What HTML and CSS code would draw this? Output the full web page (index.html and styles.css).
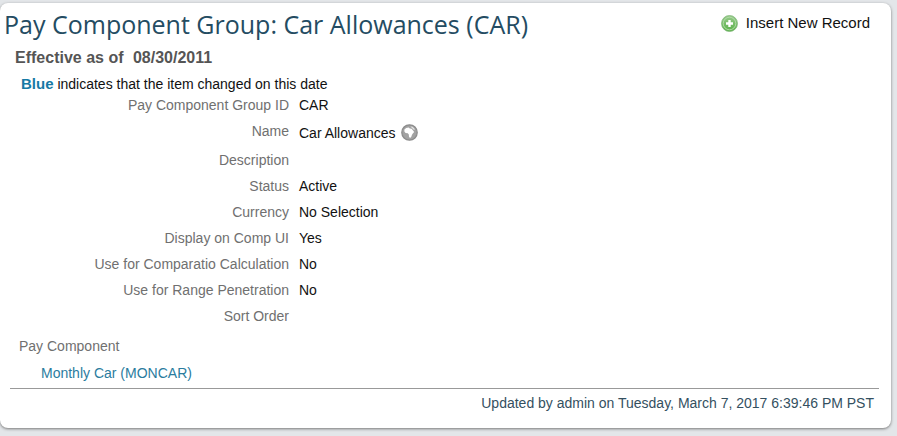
FILE: index.html
```html
<!DOCTYPE html>
<html lang="en">
<head>
    <meta charset="UTF-8">
    <meta name="viewport" content="width=device-width, initial-scale=1.0">
    <title>Pay Component Group: Car Allowances (CAR)</title>
    <link rel="stylesheet" href="styles.css">
</head>
<body>
    <main class="card">
        <header class="card-header">
            <h1>Pay Component Group: Car Allowances (CAR)</h1>
            <button type="button" class="insert-button">
                <svg class="icon" viewBox="0 0 17 17" aria-hidden="true">
                    <defs>
                        <linearGradient id="green" x1="0" y1="0" x2="0" y2="1">
                            <stop offset="0" stop-color="#98cb8c"/>
                            <stop offset="1" stop-color="#58b048"/>
                        </linearGradient>
                    </defs>
                    <circle cx="8.5" cy="8.5" r="8" fill="url(#green)" stroke="#84b97c" stroke-width=".8"/>
                    <circle cx="8.5" cy="8.5" r="6.3" fill="none" stroke="#b5dcab" stroke-width=".9"/>
                    <path d="M8.5 5v7M5 8.5h7" stroke="#fff" stroke-width="2.4"/>
                </svg>
                Insert New Record
            </button>
        </header>

        <h2 class="effective">Effective as of <time datetime="2011-08-30">08/30/2011</time></h2>
        <p class="legend"><strong>Blue</strong> indicates that the item changed on this date</p>

        <dl class="fields">
            <div class="field"><dt>Pay Component Group ID</dt><dd>CAR</dd></div>
            <div class="field field-name">
                <dt>Name</dt>
                <dd>
                    Car Allowances
                    <button type="button" class="globe-button" aria-label="Translations">
                        <svg class="icon" viewBox="0 0 17 17" aria-hidden="true">
                            <circle cx="8.5" cy="8.5" r="7.7" fill="#a2a2a2" stroke="#8c8c8c" stroke-width="1.3"/>
                            <path d="M3.4 5.6 5.2 4 7.6 3.6 8.8 4.6 10.6 4.8 12 6.6 13.2 8 12 9.2 11 10.8 10.2 13 9 14 8 12.8 7.8 10.6 6.8 9.2 4.6 9 3.4 7.6Z" fill="#fff"/>
                            <path d="M9.4 2.6 11.6 2.8 13.4 4.4 13.8 6 12.4 5.6 11 4Z" fill="#e4e4e4"/>
                        </svg>
                    </button>
                </dd>
            </div>
            <div class="field"><dt>Description</dt><dd></dd></div>
            <div class="field"><dt>Status</dt><dd>Active</dd></div>
            <div class="field"><dt>Currency</dt><dd>No Selection</dd></div>
            <div class="field"><dt>Display on Comp UI</dt><dd>Yes</dd></div>
            <div class="field"><dt>Use for Comparatio Calculation</dt><dd>No</dd></div>
            <div class="field"><dt>Use for Range Penetration</dt><dd>No</dd></div>
            <div class="field"><dt>Sort Order</dt><dd></dd></div>
        </dl>

        <section class="components">
            <h3>Pay Component</h3>
            <a href="#">Monthly Car (MONCAR)</a>
        </section>

        <footer class="updated">Updated by admin on Tuesday, March 7, 2017 6:39:46 PM PST</footer>
    </main>
</body>
</html>
```
FILE: styles.css
```css
:root {
    --page-color: #e3e6e9;
    --heading-color: #244c62;
    --label-color: #707070;
    --link-color: #2b7c9e;
}
body {
    margin: 0;
    padding: 3px 6px 8px 0;
    background-color: var(--page-color);
    color: #111;
    font-family: "Liberation Sans", Arial, sans-serif;
    font-size: 14px;
    line-height: 26px;
}
h1, h2, h3, p, dl, dd {
    margin: 0;
}
button {
    border: none;
    padding: 0;
    background: none;
    color: inherit;
    font: inherit;
    cursor: pointer;
}
.card {
    background-color: #fff;
    border-radius: 8px;
    padding-bottom: 12px;
    box-shadow: 0 1px 3px #777;
}
.card-header {
    display: flex;
    justify-content: space-between;
    padding: 0 21px 0 4px;
}
h1 {
    color: var(--heading-color);
    font-family: "Open Sans", sans-serif;
    font-size: 25px;
    font-weight: 400;
    line-height: 42px;
}
.icon {
    display: block;
    width: 17px;
    height: 17px;
}
.insert-button {
    display: flex;
    align-items: center;
    gap: 8px;
    height: 40px;
    font-size: 15px;
}
.effective {
    padding-left: 15px;
    color: #555;
    font-size: 16px;
}
.effective time {
    margin-left: 5px;
}
.legend {
    padding-left: 21px;
}
.legend strong {
    color: #167aa5;
    font-size: 15px;
}
.fields {
    margin-top: -5px;
}
.field {
    display: grid;
    grid-template-columns: 289px 1fr;
    column-gap: 10px;
    min-height: 26px;
}
.field dt {
    color: var(--label-color);
    text-align: right;
}
.field dd {
    display: flex;
    align-items: center;
    gap: 5px;
}
.field-name {
    min-height: 29px;
}
.components {
    margin: 4px 12px 0 10px;
    padding-bottom: 2px;
    border-bottom: 1px solid #999;
}
.components h3 {
    padding-left: 9px;
    color: var(--label-color);
    font-size: 14px;
    font-weight: 400;
}
.components a {
    display: inline-block;
    margin: 1px 0 0 31px;
    color: var(--link-color);
    text-decoration: none;
}
.components a:hover {
    text-decoration: underline;
}
.updated {
    padding: 1px 17px 0 10px;
    color: #34505f;
    text-align: right;
}
```
